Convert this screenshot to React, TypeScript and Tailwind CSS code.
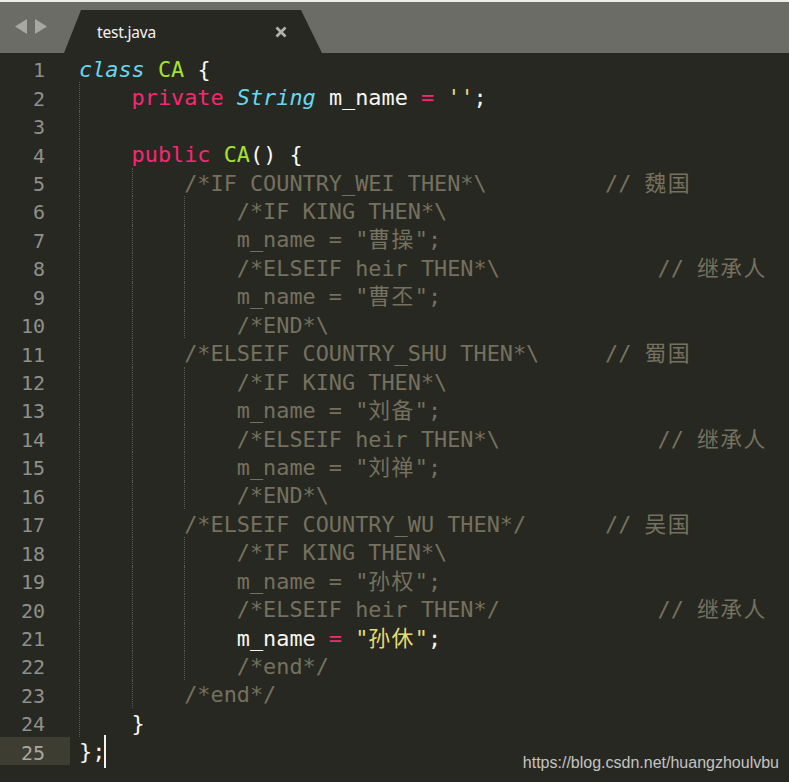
import React from "react";

type Tok = [string, string];

const KW = "text-[#f92672]";
const ST = "text-[#66d9ef] italic";
const CL = "text-[#a6e22e]";
const STR = "text-[#e6db74]";
const CM = "text-[#75715e]";
const TX = "text-[#f8f8f2]";

type Line = { indent: number; guides: number; toks: Tok[]; caret?: boolean };

const cm = (s: string): Tok[] => [[s, CM]];

const lines: Line[] = [
  { indent: 0, guides: 0, toks: [["class", ST], [" ", TX], ["CA", CL], [" {", TX]] },
  {
    indent: 4,
    guides: 1,
    toks: [["private", KW], [" ", TX], ["String", ST], [" m_name ", TX], ["=", KW], [" ", TX], ["''", STR], [";", TX]],
  },
  { indent: 0, guides: 1, toks: [] },
  { indent: 4, guides: 1, toks: [["public", KW], [" ", TX], ["CA", CL], ["() {", TX]] },
  { indent: 8, guides: 2, toks: cm("/*IF COUNTRY_WEI THEN*\\         // 魏国") },
  { indent: 12, guides: 3, toks: cm("/*IF KING THEN*\\") },
  { indent: 12, guides: 3, toks: cm('m_name = "曹操";') },
  { indent: 12, guides: 3, toks: cm("/*ELSEIF heir THEN*\\            // 继承人") },
  { indent: 12, guides: 3, toks: cm('m_name = "曹丕";') },
  { indent: 12, guides: 3, toks: cm("/*END*\\") },
  { indent: 8, guides: 2, toks: cm("/*ELSEIF COUNTRY_SHU THEN*\\     // 蜀国") },
  { indent: 12, guides: 3, toks: cm("/*IF KING THEN*\\") },
  { indent: 12, guides: 3, toks: cm('m_name = "刘备";') },
  { indent: 12, guides: 3, toks: cm("/*ELSEIF heir THEN*\\            // 继承人") },
  { indent: 12, guides: 3, toks: cm('m_name = "刘禅";') },
  { indent: 12, guides: 3, toks: cm("/*END*\\") },
  { indent: 8, guides: 2, toks: cm("/*ELSEIF COUNTRY_WU THEN*/      // 吴国") },
  { indent: 12, guides: 3, toks: cm("/*IF KING THEN*\\") },
  { indent: 12, guides: 3, toks: cm('m_name = "孙权";') },
  { indent: 12, guides: 3, toks: cm("/*ELSEIF heir THEN*/            // 继承人") },
  {
    indent: 12,
    guides: 3,
    toks: [["m_name", TX], [" ", TX], ["=", KW], [" ", TX], ['"孙休"', STR], [";", TX]],
  },
  { indent: 12, guides: 3, toks: cm("/*end*/") },
  { indent: 8, guides: 2, toks: cm("/*end*/") },
  { indent: 4, guides: 1, toks: [["}", TX]] },
  { indent: 0, guides: 0, toks: [["};", TX]], caret: true },
];

// split text so CJK characters get slight extra spacing (wider fallback glyphs in the reference)
function renderText(s: string, cls: string, key: string) {
  const parts: React.ReactNode[] = [];
  let buf = "";
  let isCjk = false;
  let i = 0;
  const flush = () => {
    if (!buf) return;
    parts.push(
      <span key={key + "-" + i++} className={isCjk ? "tracking-[1.4px]" : ""}>
        {buf}
      </span>
    );
    buf = "";
  };
  for (const ch of s) {
    const c = /[\u4e00-\u9fff]/.test(ch);
    if (c !== isCjk) {
      flush();
      isCjk = c;
    }
    buf += ch;
  }
  flush();
  return (
    <span key={key} className={cls}>
      {parts}
    </span>
  );
}

export default function App() {
  return (
    <div className="relative w-[789px] h-[782px] overflow-hidden bg-[#272822]">
      {/* top strip */}
      <div className="h-[2px] bg-[#eeeeee]" />
      {/* tab bar */}
      <div className="h-[51px] bg-[#6b6c66] flex items-end">
        <div className="w-[64px] h-full flex items-start pt-[17px] pl-[15px] gap-[8px]">
          <svg width="12" height="15" viewBox="0 0 12 15">
            <polygon points="12,0 12,15 0,7.5" fill="#a7a8a3" />
          </svg>
          <svg width="12" height="15" viewBox="0 0 12 15">
            <polygon points="0,0 0,15 12,7.5" fill="#a7a8a3" />
          </svg>
        </div>
        <div className="w-[258px] h-[43px] bg-[#272822] [clip-path:polygon(17px_0,237px_0,258px_100%,0_100%)] flex items-center pl-[33px] pr-[35px] justify-between">
          <span className="font-['Noto_Sans',sans-serif] text-[15.5px] text-[#f2f2f2] leading-none mt-[2px] tracking-[-0.2px]">
            test.java
          </span>
          <svg width="12" height="12" viewBox="0 0 12 12" className="mt-[1px]">
            <line x1="1.5" y1="1.5" x2="10.5" y2="10.5" stroke="#b3b3ae" strokeWidth="2.6" />
            <line x1="10.5" y1="1.5" x2="1.5" y2="10.5" stroke="#b3b3ae" strokeWidth="2.6" />
          </svg>
        </div>
      </div>
      {/* editor */}
      <div className="pt-px font-['DejaVu_Sans_Mono','Noto_Sans_CJK_SC',monospace]">
        {lines.map((ln, idx) => {
          const active = idx === 24;
          return (
            <div key={idx} className="flex h-[28.45px]">
              <div
                className={
                  "w-[70px] shrink-0 flex items-center justify-end pr-[25px] pt-[4px] text-[20px] " +
                  (active ? "bg-[#3e3d32] text-[#a8a8a2]" : "text-[#8f908a]")
                }
              >
                {idx + 1}
              </div>
              <div className="flex pl-[9px] text-[21.85px] whitespace-pre">
                {Array.from({ length: ln.guides }).map((_, g) => (
                  <div key={g} className="w-[4ch] shrink-0 border-l border-dotted border-[#5b5b53]" />
                ))}
                <div className="flex items-center pt-[4px]">
                  {ln.indent - ln.guides * 4 > 0 ? <span>{" ".repeat(ln.indent - ln.guides * 4)}</span> : null}
                  {ln.toks.map((t, k) => renderText(t[0], t[1], String(k)))}
                  {ln.caret ? <span className="inline-block w-[2px] h-[33px] bg-[#f4f4ee] -ml-[1px] -mt-[3px]" /> : null}
                </div>
              </div>
            </div>
          );
        })}
      </div>
      {/* watermark */}
      <div className="absolute right-[10px] bottom-[10px] font-['Liberation_Sans',Arial,sans-serif] text-[16px] leading-[18px] text-[#c3c3c3]">
        https://blog.csdn.net/huangzhoulvbu
      </div>
    </div>
  );
}
